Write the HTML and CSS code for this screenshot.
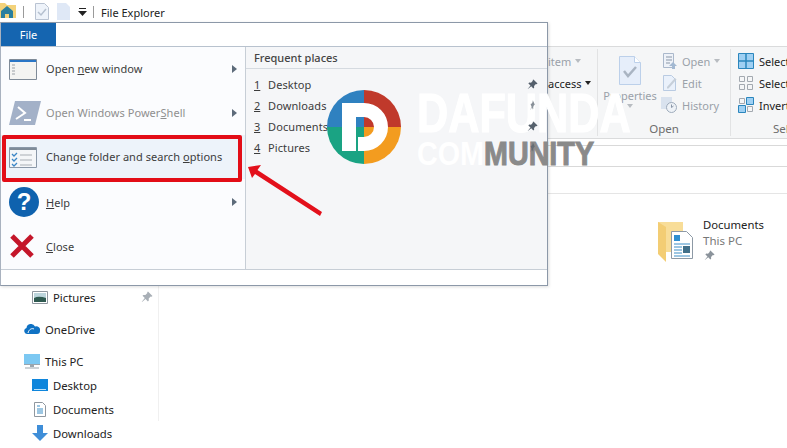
FILE: index.html
```html
<!DOCTYPE html>
<html lang="en">
<head>
  <meta charset="UTF-8" />
  <title>File Explorer</title>
  <link rel="stylesheet" href="styles.css">
</head>
<body>
  <svg class="defs" width="0" height="0">
    <symbol id="pin" viewBox="0 0 12 12">
      <path d="M7 .5l4.500 4.500-1 .8-.8-.3-2 2 .1 2-.9.9-2.300-2.400L1 11l-.2-.2 3-3.700L1.500 4.800l.9-.9 2 .1 2-2-.2-.8z" fill="currentColor"/>
    </symbol>
    <symbol id="tri" viewBox="0 0 5 8"><path d="M0 0l5 4-5 4z" fill="currentColor"/></symbol>
  </svg>

  <!-- Title bar -->
  <div class="titlebar">
    <svg class="qa-home" width="16" height="15" viewBox="0 0 16 15">
      <path d="M0 0h5l2 2h9v13H0z" fill="#f3d27a"/>
      <path d="M1 8l6-5 6 5v7H9v-4H5v4H1z" fill="#2a7f9e"/>
    </svg>
    <span class="qa-sep"></span>
    <svg class="qa-check" width="14" height="17" viewBox="0 0 14 17"><path d="M.5.500h9l4 4v12H.5z" fill="#eef3fa" stroke="#b9c3d2"/><path d="M3 9l3 3 5-6" fill="none" stroke="#b5c0cf" stroke-width="1.500"/></svg>
    <svg class="qa-doc" width="13" height="17" viewBox="0 0 13 17"><path d="M0 0h9l4 4v13H0z" fill="#dfe8f6"/></svg>
    <svg class="qa-drop" width="9" height="8" viewBox="0 0 9 8"><path d="M1 0h7v1H1zM0 3h9L4.500 8z" fill="#222"/></svg>
    <span class="qa-sep qa-sep2"></span>
    <span class="title-text">File Explorer</span>
  </div>

  <!-- Ribbon -->
  <div class="ribbon">
    <div class="rgroup rg-new">
      <div class="rg-rows">
        <span class="dim">item <i class="caret caret-dim"></i></span>
        <span>access <i class="caret"></i></span>
      </div>
    </div>
    <div class="rgroup rg-open">
      <div class="rg-main">
        <div class="props">
          <svg width="22" height="29" viewBox="0 0 22 29"><path d="M.5.500h15l6 6v22H.5z" fill="#e6eefa" stroke="#bcd0ea"/><path d="M15.500.500v6h6" fill="#fff" stroke="#bcd0ea"/><path d="M5 15l4 5 8-9" fill="none" stroke="#a9b4c2" stroke-width="2.500"/></svg>
          <span class="dim">Properties</span>
          <i class="caret caret-dim"></i>
        </div>
        <div class="rg-rows">
          <span class="dim rrow"><svg width="14" height="16" viewBox="0 0 14 16"><path d="M.5.500h10v14H.5z" fill="#eef2f8" stroke="#aab8cb"/><path d="M3 4h6M3 7h6M3 10h4" stroke="#8a97a8"/><path d="M10 9l4 4h-2v3H9v-3H6z" fill="#a3b9d2"/></svg>Open <i class="caret caret-dim"></i></span>
          <span class="dim rrow"><svg width="14" height="16" viewBox="0 0 14 16"><path d="M.5.500h8l4 4v11H.5z" fill="#eaf1fb" stroke="#b9cbe2"/><path d="M4 12l8-9 1.500 1.500-8 9H4z" fill="#c6cfd9"/></svg>Edit</span>
          <span class="dim rrow rrow-hist"><svg width="16" height="16" viewBox="0 0 16 16"><path d="M0 0h11v12H0z" fill="#d9e2ee"/><circle cx="10.500" cy="10.500" r="5" fill="#eef2f7" stroke="#9eabbb"/><path d="M10.500 7.500v3l2-1.500" fill="none" stroke="#8a97a8"/></svg>History</span>
        </div>
      </div>
      <div class="rg-label">Open</div>
    </div>
    <div class="rgroup rg-select">
      <div class="rg-rows">
        <span class="rrow"><svg width="16" height="16" viewBox="0 0 16 16"><path d="M.5.500h15v15H.5z" fill="#9fd0f3" stroke="#2b86bd"/><path d="M8 0v16M0 8h16" stroke="#2b86bd" stroke-width="1.500"/></svg>Select</span>
        <span class="rrow"><svg width="16" height="16" viewBox="0 0 16 16"><path d="M1.500 1.500h5v5h-5zM9.500 1.500h5v5h-5zM1.500 9.500h5v5h-5zM9.500 9.500h5v5h-5z" fill="none" stroke="#a3a9b0"/></svg>Select</span>
        <span class="rrow"><svg width="16" height="16" viewBox="0 0 16 16"><path d="M8.500.500h7v7h-7zM.500 8.500h7v7h-7z" fill="#9fd0f3" stroke="#2b86bd"/><path d="M1.500 1.500h5v5h-5zM9.500 9.500h5v5h-5z" fill="none" stroke="#a3a9b0"/></svg>Invert</span>
      </div>
      <div class="rg-label">Sel</div>
    </div>
  </div>

  <!-- Address bar and column header -->
  <div class="addressbar"></div>
  <div class="colheader"></div>

  <!-- Nav pane + files -->
  <div class="content">
    <div class="sidebar">
      <div class="nav lvl2"><svg width="16" height="13" viewBox="0 0 16 13"><path d="M.5.500h15v12H.5z" fill="#fff" stroke="#8f979f"/><path d="M2 2h12v9H2z" fill="#bcd5dc"/><path d="M2 7c4-2 8-1 12 0v4H2z" fill="#2f5a50"/></svg><span>Pictures</span><svg class="nav-pin" width="12" height="12"><use href="#pin"/></svg></div>
      <div class="nav lvl1 gap"><svg width="16" height="10" viewBox="0 0 16 10"><path d="M3 10a3 3 0 0 1-.5-5.900A4.500 4.500 0 0 1 11 2.500 3.800 3.800 0 0 1 16 7c0 1.700-1 3-3 3z" fill="#0f72c4"/><path d="M4 9c1-4 4-5 6-4" fill="none" stroke="#fff"/></svg><span>OneDrive</span></div>
      <div class="nav lvl1 gap"><svg width="16" height="15" viewBox="0 0 16 15"><path d="M0 0h16v10H0z" fill="#7cc8f2"/><path d="M0 10h16v1H0zM6 11h4v2H6zM1 13.500h14v1H1z" fill="#9aa5ad"/></svg><span>This PC</span></div>
      <div class="nav lvl2"><svg width="16" height="12" viewBox="0 0 16 12"><path d="M0 0h16v12H0z" fill="#0f86dc"/><path d="M2 10h12v1H2z" fill="#bfe3fa"/></svg><span>Desktop</span></div>
      <div class="nav lvl2"><svg class="nav-doc" width="12" height="15" viewBox="0 0 12 15"><path d="M.5.500h8l3 3v11H.5z" fill="#fff" stroke="#8f979f"/><path d="M3 4h3M3 7h6M3 9h6M3 11h6" stroke="#3a8ec6"/></svg><span>Documents</span></div>
      <div class="nav lvl2"><svg width="16" height="16" viewBox="0 0 16 16"><path d="M5 0h6v8h5l-8 8-8-8h5z" fill="#3f8ed8"/></svg><span>Downloads</span></div>
    </div>
    <div class="files">
      <div class="tile">
        <svg width="35" height="42" viewBox="0 0 35 42">
          <path d="M0 0h25v30H0z" fill="#f8dd98"/>
          <path d="M0 0l8 5v35L0 32z" fill="#f3cd74"/>
          <path d="M13.500 9.500h15l6 6v21h-21z" fill="#fff" stroke="#8d99a5"/>
          <path d="M16 13h6v6h-6z" fill="#2f8fd0"/>
          <path d="M16 22h16M16 25h8M16 28h8M16 31h8M16 34h16" stroke="#3a8ec6"/>
          <path d="M25 24h7v7h-7z" fill="#41708a"/>
        </svg>
        <div class="tile-text">
          <div class="tile-name">Documents</div>
          <div class="tile-sub">This PC</div>
          <svg class="tile-pin" width="11" height="11"><use href="#pin"/></svg>
        </div>
      </div>
    </div>
  </div>

  <!-- File menu -->
  <div class="filemenu">
    <div class="filetab">File</div>
    <div class="menubody">
      <div class="menuleft">
        <div class="mitem">
          <svg width="28" height="21" viewBox="0 0 28 21"><path d="M.5.500h27v20H.5z" fill="#f4f4f2" stroke="#7f8b98"/><path d="M1 1h26v2H1z" fill="#2a76c6"/><path d="M3 6h3M3 9h3M3 12h3M3 15h3" stroke="#9aa0a6"/></svg>
          <span class="mlabel">Open <u>n</u>ew window</span>
          <svg class="mtri" width="5" height="8"><use href="#tri"/></svg>
        </div>
        <div class="mitem disabled">
          <svg width="32" height="24" viewBox="0 0 32 24"><path d="M6 0h26l-6 24H0z" fill="#a3b1c8"/><path d="M9 6l7 6-9 6M15 19h7" fill="none" stroke="#fff" stroke-width="2"/></svg>
          <span class="mlabel">Open Windows Power<u>S</u>hell</span>
          <svg class="mtri" width="5" height="8"><use href="#tri"/></svg>
        </div>
        <div class="mitem active">
          <svg width="28" height="21" viewBox="0 0 28 21"><path d="M.5.500h27v20H.5z" fill="#f4f6f8" stroke="#8a98a8"/><path d="M1 1h26v2H1z" fill="#7f8b98"/><path d="M3 7l2 2 3-3M3 12l2 2 3-3M3 17l2 2 3-3" fill="none" stroke="#3b86c6" stroke-width="1.300"/><path d="M11 8h12M11 13h12M11 18h12" stroke="#a8aeb4"/></svg>
          <span class="mlabel">Change folder and search <u>o</u>ptions</span>
        </div>
        <div class="mitem">
          <svg width="30" height="30" viewBox="0 0 30 30"><circle cx="15" cy="15" r="15" fill="#0f62ae"/><text x="15" y="23" class="qmark">?</text></svg>
          <span class="mlabel"><u>H</u>elp</span>
          <svg class="mtri" width="5" height="8"><use href="#tri"/></svg>
        </div>
        <div class="mitem">
          <svg width="26" height="26" viewBox="0 0 26 26"><path d="M3 3l20 20M23 3L3 23" stroke="#c4162a" stroke-width="5"/></svg>
          <span class="mlabel"><u>C</u>lose</span>
        </div>
      </div>
      <div class="menuright">
        <div class="fp-head">Frequent places</div>
        <div class="fp-list">
          <div class="fp"><u>1</u><span>Desktop</span><svg width="11" height="11"><use href="#pin"/></svg></div>
          <div class="fp"><u>2</u><span>Downloads</span><svg width="11" height="11" class="pin-side"><use href="#pin"/></svg></div>
          <div class="fp"><u>3</u><span>Documents</span><svg width="11" height="11"><use href="#pin"/></svg></div>
          <div class="fp"><u>4</u><span>Pictures</span><svg width="11" height="11" class="pin-side"><use href="#pin"/></svg></div>
        </div>
      </div>
    </div>
    <div class="menufoot"></div>
  </div>

  <!-- Screenshot annotations -->
  <div class="redbox"></div>
  <svg class="arrow" width="80" height="55" viewBox="0 0 80 55">
    <path d="M2 2L15 0l-3.500 5L76 47l-2 4L9 9l-3 4z" fill="#e3101b"/>
  </svg>

  <!-- Watermark -->
  <div class="wm-logo">
    <svg width="74" height="74" viewBox="0 0 74 74">
      <path d="M37 37V0A37 37 0 0 0 0 37z" fill="#2f81c0"/>
      <path d="M37 37V0a37 37 0 0 1 37 37z" fill="#c0392b"/>
      <path d="M37 37H0a37 37 0 0 0 37 37z" fill="#1aa383"/>
      <path d="M37 37h37a37 37 0 0 1-37 37z" fill="#f39c1f"/>
      <path d="M15 13h22a24 24 0 0 1 0 48h-6V47h6a10 10 0 0 0 0-20h-8v34H15z" fill="#fff"/>
    </svg>
  </div>
  <div class="wm-text">
    <div class="wm-top">DAFUNDA</div>
    <div class="wm-bottom">COM<span>MUNITY</span></div>
  </div>
</body>
</html>
```

FILE: styles.css
```css
/* ---------- Page ---------- */
body {
  margin: 0;
  width: 787px;
  height: 448px;
  overflow: hidden;
  position: relative;
  background: #fff;
  color: #222;
  font-family: "Noto Sans", sans-serif;
  font-size: 11px;
}
.defs { position: absolute; }
.dim { color: #9aa1a9; }

/* ---------- Title bar ---------- */
.titlebar {
  height: 23px;
  display: flex;
  align-items: center;
  color: #222;
}
.titlebar svg { flex: none; }
.qa-home { align-self: flex-end; margin-bottom: 5px; }
.qa-sep { width: 1px; height: 12px; background: #9a9a9a; margin-left: 7px; }
.qa-check { margin-left: 11px; }
.qa-doc { margin-left: 8px; }
.qa-drop { margin-left: 8px; }
.qa-sep2 { margin-left: 6px; }
.title-text { margin-left: 7px; padding-top: 1px; }

/* ---------- Ribbon ---------- */
.ribbon {
  margin-top: 23px;
  height: 91px;
  background: #f5f6f7;
  border-top: 1px solid #dadbdc;
  border-bottom: 1px solid #dadbdc;
  display: flex;
  padding-left: 547px;
  overflow: hidden;
}
.rgroup { position: relative; flex: none; margin: 2px 0; padding-top: 2px; }
.rg-new { width: 50px; border-right: 1px solid #e2e3e4; }
.rg-new .rg-rows { align-items: flex-start; padding-left: 1px; }
.rg-open { width: 132px; border-right: 1px solid #e2e3e4; }
.rg-select { width: 48px; padding-left: 7px; }
.rg-main { display: flex; height: 66px; }
.rg-rows { display: flex; flex-direction: column; }
.rg-rows > span { height: 22px; margin-top: -1px; margin-bottom: 1px; display: flex; align-items: center; gap: 4px; white-space: nowrap; }
.rrow svg { flex: none; margin-right: 1px; }
.rrow-hist { margin-left: -2px; }
.props {
  width: 64px;
  padding-top: 5px;
  display: flex;
  flex-direction: column;
  align-items: center;
}
.props span { margin-top: 3px; line-height: 16px; }
.rg-open .rg-rows { padding-left: 1px; }
.rg-label { position: absolute; bottom: 0; left: 0; right: 0; text-align: center; color: #6d6d6d; font-size: 11.5px; }
.rg-select .rg-label { right: auto; padding-left: 42px; }
.caret {
  display: inline-block;
  width: 0;
  height: 0;
  border: 3px solid transparent;
  border-top: 4px solid #222;
  border-bottom: 0;
  vertical-align: middle;
}
.caret-dim { border-top-color: #b8bcc1; }

/* ---------- Address bar ---------- */
.addressbar {
  margin-top: 6px;
  height: 20px;
  border-top: 1px solid #d9d9d9;
  border-bottom: 1px solid #d9d9d9;
}
.colheader { height: 26px; border-bottom: 1px solid #e5e5e5; }

/* ---------- Nav pane + files ---------- */
.content { display: flex; height: 254px; margin-top: -27px; font-size: 11.3px; }
.sidebar {
  width: 158px;
  border-right: 1px solid #f0f0f0;
  padding-top: 118px;
  background: #fff;
}
.nav { height: 24px; display: flex; align-items: center; gap: 5px; }
.nav svg { flex: none; }
.lvl1 { padding-left: 24px; }
.lvl2 { padding-left: 32px; }
.gap { margin-top: 8px; }
.nav-pin { margin-left: auto; margin-right: 5px; color: #a8afb6; }
.nav-doc { margin: 0 2px; }

.files { flex: 1; padding: 55px 0 0 499px; }
.tile { display: flex; gap: 10px; }
.tile-text { margin-top: -5px; }
.tile-name { line-height: 16px; color: #222; }
.tile-sub { line-height: 16px; color: #777; font-size: 11.5px; }
.tile-pin { display: block; color: #8b939b; margin: 1px 0 0 1px; }

/* ---------- File menu ---------- */
.filemenu {
  position: absolute;
  left: 0;
  top: 22px;
  width: 546px;
  height: 262px;
  border: 1px solid #8c98a8;
  border-left-color: #a9b2bf;
  background: #fff;
  display: flex;
  flex-direction: column;
  box-shadow: 1px 1px 3px #0002;
}
.filetab {
  width: 55px;
  height: 23px;
  background: #1565b0;
  color: #fff;
  text-align: center;
  line-height: 24px;
}
.menubody {
  height: 222px;
  display: flex;
  border-top: 1px solid #b8c2ce;
  border-bottom: 1px solid #c7ced6;
}
.menuleft {
  width: 244px;
  background: #fbfcfe;
  border-right: 1px solid #c7ced6;
}
.mitem { height: 44px; display: flex; align-items: center; position: relative; padding-left: 45px; color: #3c3c3c; }
.mitem > svg:first-child { position: absolute; left: 8px; }
.mitem.disabled { color: #8f8f8f; }
.mitem.active { background: #edf3fa; }
.mitem:nth-child(4) { margin-top: 1px; }
.mitem:nth-child(n+4) .mlabel { margin-top: 1px; }
.mlabel { white-space: nowrap; letter-spacing: .05px; margin-top: -1px; }
.mtri { margin-left: auto; margin-right: 8px; color: #5d6b7a; }
.menuright { flex: 1; background: #f5f6f8; }
.fp-head {
  height: 21px;
  line-height: 22px;
  padding-left: 8px;
  color: #444;
  font-weight: 500;
  border-bottom: 1px solid #d5dae0;
}
.fp-list { padding-top: 5px; }
.fp { height: 21px; display: flex; align-items: center; padding: 0 8px; color: #3c3c3c; }
.fp u { width: 14px; }
.fp span { flex: 1; letter-spacing: .1px; }
/* pins stay above the watermark, as in the screenshot */
.fp svg { color: #55606c; margin-right: 1px; position: relative; z-index: 1; }
.fp .pin-side { transform: scaleX(.45); opacity: .7; }
.menufoot { flex: 1; background: #fff; }
.qmark { fill: #fff; font-family: "Liberation Sans", sans-serif; font-size: 24px; font-weight: 700; text-anchor: middle; }

/* ---------- Annotations ---------- */
.redbox {
  position: absolute;
  left: 2px;
  top: 135px;
  width: 232px;
  height: 39px;
  border: 4px solid #e30d17;
  border-radius: 2px;
}
.arrow { position: absolute; left: 246px; top: 165px; }

/* ---------- Watermark ---------- */
.wm-logo { position: absolute; left: 327px; top: 90px; width: 74px; height: 74px; }
.wm-text {
  position: absolute;
  left: 417px;
  top: 83px;
  font-family: "Liberation Sans", sans-serif;
  font-weight: 700;
  color: #fff;
  white-space: nowrap;
}
.wm-top { font-size: 46px; line-height: 50px; transform: scale(.94, 1.2); transform-origin: 0 0; -webkit-text-stroke: 1px #fff; }
.wm-bottom { font-size: 33px; line-height: 30px; margin-top: 6px; transform: scaleX(.87); transform-origin: 0 0; }
.wm-bottom span { color: #8a8a8a; -webkit-text-stroke: 1px #8a8a8a; }
```
